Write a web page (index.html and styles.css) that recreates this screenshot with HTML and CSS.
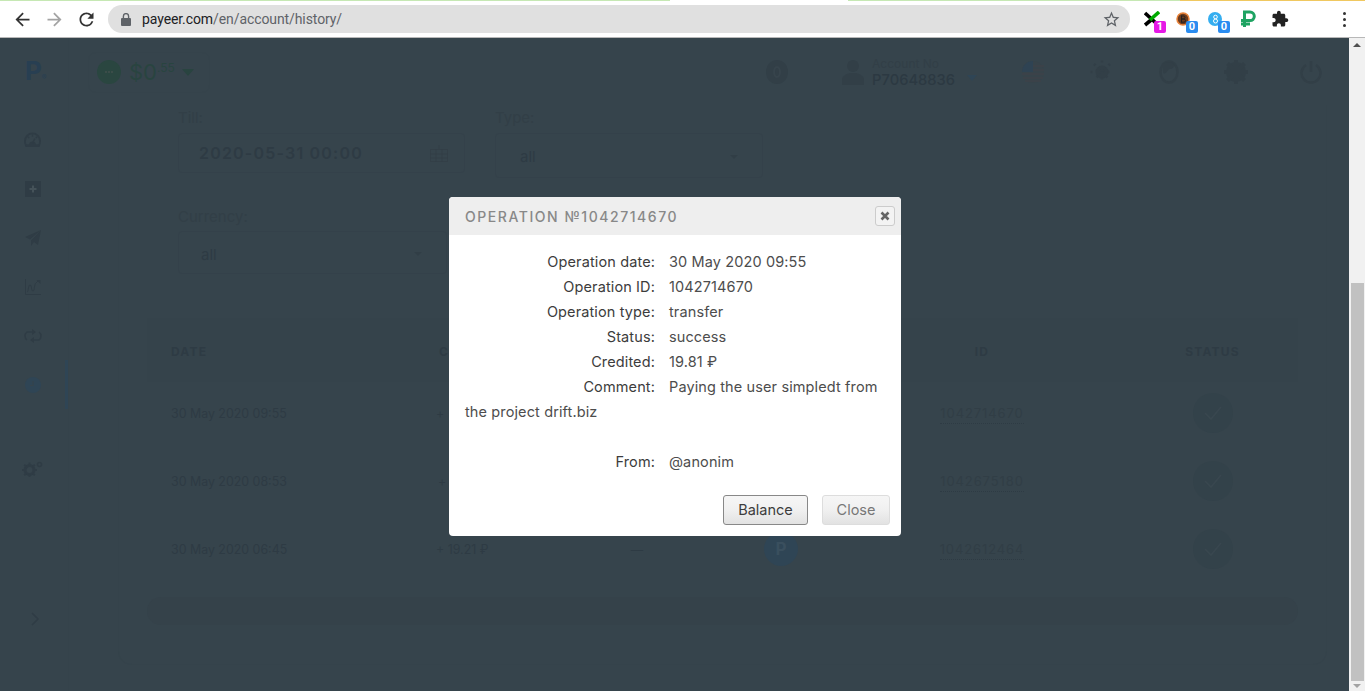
FILE: index.html
```html
<!DOCTYPE html>
<html lang="en">
<head>
  <meta charset="UTF-8">
  <meta name="viewport" content="width=device-width, initial-scale=1.0">
  <title>Payeer - History</title>
  <link rel="stylesheet" href="styles.css">
</head>
<body>
  <!-- browser toolbar -->
  <div class="load-strip"></div>
  <header class="toolbar">
    <div class="nav-btn">
      <svg width="21" height="21" viewBox="0 0 24 24"><path fill="#333" d="M20 11H7.830l5.590-5.590L12 4l-8 8 8 8 1.410-1.410L7.830 13H20v-2z"/></svg>
    </div>
    <div class="nav-btn">
      <svg width="21" height="21" viewBox="0 0 24 24"><path fill="#a3a3a3" d="M4 11h12.170l-5.590-5.590L12 4l8 8-8 8-1.410-1.410L16.170 13H4v-2z"/></svg>
    </div>
    <div class="nav-btn">
      <svg width="21" height="21" viewBox="0 0 24 24"><path fill="#333" d="M17.650 6.350A7.958 7.958 0 0 0 12 4c-4.420 0-7.990 3.580-7.990 8s3.570 8 7.990 8c3.730 0 6.840-2.550 7.730-6h-2.080A5.990 5.990 0 0 1 12 18c-3.310 0-6-2.690-6-6s2.690-6 6-6c1.660 0 3.140.69 4.220 1.780L13 11h7V4l-2.350 2.350z"/></svg>
    </div>
    <div class="omnibox">
      <svg class="lock" width="10" height="13" viewBox="0 0 10 13"><path fill="#5f6368" d="M1 5h8a1 1 0 0 1 1 1v6a1 1 0 0 1-1 1H1a1 1 0 0 1-1-1V6a1 1 0 0 1 1-1z"/><path fill="none" stroke="#5f6368" stroke-width="1.400" d="M2.400 5V3.200a2.600 2.600 0 0 1 5.200 0V5"/></svg>
      <span class="url"><b>payeer.com</b>/en/account/history/</span>
      <svg class="star" width="19" height="19" viewBox="0 0 24 24"><path fill="#5f6368" d="M22 9.240l-7.190-.62L12 2 9.190 8.630 2 9.240l5.460 4.730L5.820 21 12 17.270 18.180 21l-1.640-7.030L22 9.240zM12 15.400l-3.760 2.270 1-4.280-3.320-2.880 4.380-.38L12 6.100l1.710 4.040 4.380.38-3.320 2.880 1 4.280L12 15.400z"/></svg>
    </div>
    <div class="ext">
      <svg width="16" height="16" viewBox="0 0 16 16"><path stroke="#000" stroke-width="3.600" d="M1 2l12 11"/><path stroke="#000" stroke-width="3.600" d="M1 14l6-5"/><path stroke="#0a0" stroke-width="3.600" d="M6 9l9-8"/></svg>
      <span class="badge badge-pink">1</span>
    </div>
    <div class="ext ext-shift">
      <svg width="14" height="14" viewBox="0 0 14 14"><circle cx="7" cy="7" r="6" fill="#6b3a1e" stroke="#e8833a" stroke-width="1.500"/><path d="M5.500 3.500v7M5.500 4h2a1.500 1.500 0 0 1 0 3h-2m0 0h2.400a1.600 1.600 0 0 1 0 3.200h-2.400" fill="none" stroke="#222" stroke-width="1"/></svg>
      <span class="badge badge-blue">0</span>
    </div>
    <div class="ext ext-shift">
      <svg width="14" height="14" viewBox="0 0 14 14"><circle cx="7" cy="7" r="7" fill="#35aef0"/><circle cx="7.500" cy="5" r="1.800" fill="none" stroke="#fff" stroke-width="1"/><circle cx="7.500" cy="9" r="2" fill="none" stroke="#fff" stroke-width="1"/></svg>
      <span class="badge badge-blue">0</span>
    </div>
    <div class="ext">
      <svg width="16" height="18" viewBox="0 0 16 18"><path d="M4.500 17V2h5.500a4.200 4.200 0 0 1 0 8.600H1M1 14h9" fill="none" stroke="#1ea362" stroke-width="3"/></svg>
    </div>
    <div class="ext">
      <svg width="18" height="18" viewBox="0 0 24 24"><path fill="#222" d="M20.500 11H19V7c0-1.100-.9-2-2-2h-4V3.500C13 2.120 11.880 1 10.500 1S8 2.120 8 3.500V5H4c-1.100 0-1.990.9-1.990 2v3.800H3.500c1.490 0 2.700 1.210 2.700 2.700s-1.210 2.700-2.700 2.700H2V20c0 1.100.9 2 2 2h3.800v-1.500c0-1.490 1.210-2.700 2.700-2.700 1.490 0 2.700 1.210 2.700 2.700V22H17c1.100 0 2-.9 2-2v-4h1.500c1.380 0 2.500-1.120 2.500-2.500S21.880 11 20.500 11z"/></svg>
    </div>
    <div class="menu-dots"><i></i><i></i><i></i></div>
  </header>

  <div class="viewport">
    <div class="page">
      <aside class="sidebar">
        <div class="logo">P<small>®</small></div>
        <nav class="side-nav">
          <div class="side-item">
            <svg width="17" height="15" viewBox="0 0 18 16"><path d="M2.500 15A8 8 0 0 1 1 9.500a8 8 0 0 1 16 0A8 8 0 0 1 15.500 15" fill="none" stroke="#2f3c45" stroke-width="2"/><path fill="#2f3c45" d="M1 13h4.500a3.500 3 0 0 1 7 0H17v1a2 2 0 0 1-2 2H3a2 2 0 0 1-2-2z"/><path stroke="#2f3c45" stroke-width="1.500" d="M9 2.500v2.500M4 5l1.500 1.500M14 5l-1.500 1.500M9 12l2.500-5"/></svg>
          </div>
          <div class="side-item">
            <svg width="16" height="16" viewBox="0 0 16 16"><rect width="16" height="16" fill="#2f3c45"/><path stroke="#455259" stroke-width="2" d="M8 4.500v7M4.500 8h7"/></svg>
          </div>
          <div class="side-item">
            <svg width="16" height="16" viewBox="0 0 16 16"><path fill="#2f3c45" d="M16 0L0 7l5 2.500L16 0zM16 0L6 10.500v5.500l3-4 4 3z"/></svg>
          </div>
          <div class="side-item">
            <svg width="16" height="16" viewBox="0 0 16 16"><path d="M.5 0v15.500H16M2 13c2-1 1-7 3-7s1 6 3 6 1-7 3-8l3-3" fill="none" stroke="#2f3c45" stroke-width="1"/><path fill="#2f3c45" d="M11.500 1H15.500V5z"/></svg>
          </div>
          <div class="side-item">
            <svg width="18" height="16" viewBox="0 0 18 16"><path d="M3 12a5 5 0 0 1 0-8h7M15 4a5 5 0 0 1 0 8H8" fill="none" stroke="#2f3c45" stroke-width="1.500"/><path fill="#2f3c45" d="M8 1l4 3-4 3zM10 9l-4 3 4 3z"/></svg>
          </div>
          <div class="side-item side-item-active">
            <svg width="16" height="16" viewBox="0 0 16 16"><circle cx="8" cy="8" r="8" fill="#2f4555"/><path d="M8 4v4.500H5" fill="none" stroke="#36444c" stroke-width="1.200"/></svg>
          </div>
          <div class="side-item side-item-gear">
            <svg width="21" height="16" viewBox="0 0 21 16"><circle cx="7.500" cy="9" r="4.500" fill="none" stroke="#2f3c45" stroke-width="3"/><path stroke="#2f3c45" stroke-width="2" stroke-dasharray="3 9" d="M7.500 1.500v15M0 9h15M2.200 3.700l10.600 10.600M12.800 3.700L2.200 14.300"/><circle cx="17.500" cy="3.500" r="2" fill="none" stroke="#2f3c45" stroke-width="1.500"/></svg>
          </div>
        </nav>
        <div class="side-item side-toggle">
          <svg width="10" height="14" viewBox="0 0 10 14"><path d="M2 1l6 6-6 6" fill="none" stroke="#2f3c45" stroke-width="1.500"/></svg>
        </div>
      </aside>

      <main class="main">
        <div class="topbar">
          <div class="balance">
            <span class="balance-dot"><i></i><i></i><i></i></span>
            <span class="balance-sum">$0<sup>.55</sup></span>
            <span class="caret caret-green"></span>
          </div>
          <div class="top-right">
            <div class="top-icon top-coin">
              <svg width="22" height="24" viewBox="0 0 22 24"><ellipse cx="11" cy="12" rx="11" ry="12" fill="#323f47"/><ellipse cx="11" cy="12" rx="3" ry="5" fill="none" stroke="#37444c" stroke-width="2"/></svg>
            </div>
            <div class="account">
              <svg width="22" height="26" viewBox="0 0 22 26"><circle cx="11" cy="7" r="6" fill="#323f47"/><path fill="#323f47" d="M0 26v-5c0-4 4-6 8-7h6c4 1 8 3 8 7v5z"/></svg>
              <div class="account-text">
                <span class="account-label">Account No</span>
                <span class="account-num">P70648836</span>
              </div>
              <span class="caret caret-blue"></span>
            </div>
            <div class="top-icon top-flag">
              <svg width="22" height="22" viewBox="0 0 22 22"><circle cx="11" cy="11" r="11" fill="#37434a"/><path stroke="#3b4249" stroke-width="2" d="M0 13h22M1 17h20M3 20h16M11 5h11M11 9h11"/><path fill="#2f4353" d="M11 0v11H0A11 11 0 0 1 11 0z"/></svg>
            </div>
            <div class="top-icon top-sun">
              <svg width="24" height="24" viewBox="0 0 24 24"><circle cx="12" cy="12" r="6.500" fill="#323f47"/><path stroke="#323f47" stroke-width="2.500" stroke-dasharray="2 6.500" d="M12 .5v23M.5 12h23M4 4l16 16M20 4L4 20"/></svg>
            </div>
            <div class="top-icon">
              <svg width="20" height="24" viewBox="0 0 20 24"><ellipse cx="10" cy="12" rx="8.500" ry="10.500" fill="none" stroke="#323f47" stroke-width="2.500"/><path fill="#323f47" d="M4 4c4-3 10-2 12 1-2 2-2 4-5 4s-3 6-7 4z"/></svg>
            </div>
            <div class="top-icon">
              <svg width="24" height="24" viewBox="0 0 24 24"><circle cx="12" cy="12" r="7" fill="none" stroke="#323f47" stroke-width="6"/><path stroke="#323f47" stroke-width="4" d="M12 0v24M0 12h24M3.500 3.500l17 17M20.500 3.500l-17 17"/></svg>
            </div>
            <div class="top-icon top-power">
              <svg width="22" height="24" viewBox="0 0 22 24"><path d="M6 5a9.500 9.500 0 1 0 10 0" fill="none" stroke="#323f47" stroke-width="2.500"/><path stroke="#323f47" stroke-width="2.500" d="M11 1v11"/></svg>
            </div>
          </div>
        </div>

        <section class="panel">
          <div class="filters">
            <div class="field">
              <label class="field-label">Till:</label>
              <div class="field-box date-box">
                <span class="date-value">2020-05-31 00:00</span>
                <svg width="18" height="18" viewBox="0 0 18 18"><path d="M.5 5.500h17v12H.5zM.5 10h17M.5 14h17M6 5.500v12M12 5.500v12M9 1v4" fill="none" stroke="#333f47" stroke-width="1"/></svg>
              </div>
            </div>
            <div class="field">
              <label class="field-label">Type:</label>
              <div class="field-box select-box type-box"><span>all</span><span class="caret caret-small"></span></div>
            </div>
            <div class="field field-currency">
              <label class="field-label">Currency:</label>
              <div class="field-box select-box currency-box"><span>all</span><span class="caret caret-small"></span></div>
            </div>
          </div>

          <div class="history">
            <div class="history-row history-head">
              <div class="col-date">Date</div>
              <div class="col-credit">Credit</div>
              <div></div>
              <div></div>
              <div class="col-mid">ID</div>
              <div class="col-mid">Status</div>
            </div>
            <div class="history-row">
              <div class="col-date">30 May 2020 09:55</div>
              <div class="col-credit">+</div>
              <div></div>
              <div></div>
              <div class="col-mid"><span class="op-id">1042714670</span></div>
              <div class="col-mid"><span class="check-circle"><svg width="20" height="16" viewBox="0 0 20 16"><path d="M2 8l6 6L18 2" fill="none" stroke="#39474f" stroke-width="1.600"/></svg></span></div>
            </div>
            <div class="history-row">
              <div class="col-date">30 May 2020 08:53</div>
              <div class="col-credit col-credit-short">+</div>
              <div></div>
              <div></div>
              <div class="col-mid"><span class="op-id">1042675180</span></div>
              <div class="col-mid"><span class="check-circle"><svg width="20" height="16" viewBox="0 0 20 16"><path d="M2 8l6 6L18 2" fill="none" stroke="#39474f" stroke-width="1.600"/></svg></span></div>
            </div>
            <div class="history-row">
              <div class="col-date">30 May 2020 06:45</div>
              <div class="col-credit">+ 19.21 ₽</div>
              <div class="col-mid">—</div>
              <div class="col-mid"><span class="pay-circle">P</span></div>
              <div class="col-mid"><span class="op-id">1042612464</span></div>
              <div class="col-mid"><span class="check-circle"><svg width="20" height="16" viewBox="0 0 20 16"><path d="M2 8l6 6L18 2" fill="none" stroke="#39474f" stroke-width="1.600"/></svg></span></div>
            </div>
            <div class="history-foot"></div>
          </div>
        </section>
      </main>

      <div class="scrollbar">
        <span class="sb-arrow sb-up"></span>
        <div class="sb-track"><div class="sb-thumb"></div></div>
        <span class="sb-arrow sb-down"></span>
      </div>
    </div>

    <!-- operation dialog -->
    <div class="modal">
      <div class="modal-head">
        <span class="modal-title">Operation №1042714670</span>
        <span class="modal-x">
          <svg width="10" height="10" viewBox="0 0 10 10"><path d="M1.500 1.500l7 7M8.500 1.500l-7 7" stroke="#666" stroke-width="2.600"/></svg>
        </span>
      </div>
      <div class="modal-body">
        <div class="info"><span class="info-label">Operation date:</span><span>30 May 2020 09:55</span></div>
        <div class="info"><span class="info-label">Operation ID:</span><span>1042714670</span></div>
        <div class="info"><span class="info-label">Operation type:</span><span>transfer</span></div>
        <div class="info"><span class="info-label">Status:</span><span>success</span></div>
        <div class="info"><span class="info-label">Credited:</span><span>19.81 ₽</span></div>
        <div class="info"><span class="info-label">Comment:</span><span>Paying the user simpledt from</span></div>
        <div class="info info-comment">the project drift.biz</div>
        <div class="info"><span class="info-label">From:</span><span>@anonim</span></div>
      </div>
      <div class="modal-foot">
        <button class="btn btn-main">Balance</button>
        <button class="btn btn-close">Close</button>
      </div>
    </div>
  </div>
</body>
</html>
```

FILE: styles.css
```css
* {
  box-sizing: border-box;
}
body {
  margin: 0;
  height: 691px;
  overflow: hidden;
  font-family: Inter, 'Liberation Sans', sans-serif;
  background-color: #36444c;
  color: #2e3b44;
}

/* browser chrome */
.load-strip {
  height: 1px;
  background: linear-gradient(90deg, #c6e8b4 0, #c6e8b4 670px, #fff 670px, #fff 848px, #c6e8b4 848px, #c6e8b4 1180px, #f0c860 1180px);
}
.toolbar {
  height: 37px;
  display: flex;
  align-items: center;
  padding: 0 5px 0 6px;
  background: #fff;
  border-bottom: 1px solid #b8b8b8;
}
.nav-btn {
  width: 32px;
  display: flex;
  justify-content: center;
}
.omnibox {
  width: 1022px;
  height: 28px;
  margin: 0 6px;
  padding: 0 9px 0 13px;
  display: flex;
  align-items: center;
  background: #e0e0e0;
  border-radius: 14px;
}
.lock {
  margin-right: 11px;
}
.url {
  flex: 1;
  font: 14px Roboto, sans-serif;
  letter-spacing: -.09px;
  color: #5f6368;
}
.url b {
  font-weight: 400;
  color: #202124;
}
.ext {
  width: 32px;
  height: 28px;
  position: relative;
  display: flex;
  align-items: center;
  justify-content: center;
}
.ext-shift svg {
  margin-right: 2px;
}
.badge {
  position: absolute;
  left: 18px;
  top: 16px;
  width: 12px;
  height: 12px;
  border-radius: 2px;
  font: bold 11px/12px Roboto, sans-serif;
  text-align: center;
  color: #fff;
}
.badge-pink {
  background: #e619e6;
}
.badge-blue {
  background: #2a8cf0;
}
.menu-dots {
  width: 32px;
  margin-left: auto;
  display: flex;
  flex-direction: column;
  align-items: center;
  gap: 3px;
}
.menu-dots i {
  width: 3px;
  height: 3px;
  border-radius: 50%;
  background: #333;
}

/* page under the dialog */
.viewport {
  position: relative;
  height: 653px;
}
.page {
  height: 100%;
  display: flex;
}
.sidebar {
  width: 69px;
  flex-shrink: 0;
  display: flex;
  flex-direction: column;
  border-right: 1px solid #35434b;
  padding-bottom: 48px;
}
.logo {
  height: 67px;
  padding: 18px 0 0 25px;
  font-size: 26px;
  line-height: 30px;
  font-weight: 700;
  color: #283f52;
}
.logo small {
  font-size: 7px;
  font-weight: 400;
}
.side-nav {
  padding-top: 10px;
  flex: 1;
}
.side-item {
  height: 49px;
  display: flex;
  align-items: center;
  justify-content: center;
  border-right: 3px solid transparent;
}
.side-item-active {
  border-right-color: #2f4555;
}
.side-item-gear {
  margin-top: 35px;
}
.side-toggle {
  padding-left: 4px;
}
.main {
  flex: 1;
  min-width: 0;
  display: flex;
  flex-direction: column;
}
.topbar {
  height: 67px;
  flex-shrink: 0;
  display: flex;
  align-items: center;
  padding: 0 26px 0 19px;
}
.balance {
  width: 122px;
  height: 41px;
  display: flex;
  align-items: center;
  padding-left: 8px;
  margin-top: 1px;
  border: 1px solid #35434b;
  border-radius: 8px;
}
.balance-dot {
  width: 24px;
  height: 24px;
  flex-shrink: 0;
  border-radius: 50%;
  background: #2a4640;
  display: flex;
  align-items: center;
  justify-content: center;
  gap: 1px;
}
.balance-dot i {
  width: 2px;
  height: 2px;
  border-radius: 50%;
  background: #42504c;
}
.balance-sum {
  margin-left: 8px;
  font-size: 22px;
  color: #294440;
}
.balance-sum sup {
  font-size: 12px;
  line-height: 0;
}
.caret {
  width: 0;
  height: 0;
  border-style: solid;
  border-color: #2e3b44 transparent transparent;
  border-width: 6px 5px 0;
}
.caret-green {
  margin-left: 7px;
  border-top-color: #294440;
  border-width: 7px 6px 0;
}
.caret-blue {
  margin-left: 4px;
  margin-top: 12px;
  border-top-color: #2f4555;
}
.caret-small {
  border-width: 4px 4px 0;
  border-top-color: #313e46;
}
.top-right {
  margin-left: auto;
  display: flex;
  align-items: center;
  gap: 43px;
}
.top-icon {
  width: 24px;
  display: flex;
  justify-content: center;
}
.top-coin {
  margin-right: 10px;
}
.top-flag {
  margin-left: 1px;
}
.top-sun {
  margin-left: 2px;
}
.top-power {
  margin-left: 8px;
}
.account {
  display: flex;
  align-items: center;
  gap: 8px;
}
.account-text {
  display: flex;
  flex-direction: column;
  line-height: 16px;
}
.account-label {
  font-size: 12px;
  color: #323f47;
}
.account-num {
  font-size: 14.700px;
  font-weight: 500;
  color: #2c3942;
}
.panel {
  flex: 1;
  margin: 0 22px 26px 49px;
  padding: 3px 28px 0;
  border: 1px solid #35434b;
  border-top: 0;
  border-radius: 0 0 14px 14px;
}
.filters {
  display: grid;
  grid-template-columns: 287px 268px;
  column-gap: 30px;
  row-gap: 29px;
  padding-left: 31px;
}
.field-label {
  display: block;
  height: 25px;
  line-height: 20px;
  font-size: 15px;
  color: #323f47;
}
.field-box {
  display: flex;
  align-items: center;
  justify-content: space-between;
  padding: 0 24px;
  border: 1px solid #34414a;
  border-radius: 4px;
  font-size: 15px;
}
.date-box {
  height: 40px;
  padding: 0 16px 0 20px;
}
.date-value {
  font-size: 16px;
  font-weight: 600;
  letter-spacing: 1.200px;
}
.type-box {
  height: 45px;
  padding-top: 2px;
}
.currency-box {
  height: 43px;
  width: 269px;
  padding: 3px 24px 0 22px;
}
.field-currency {
  grid-column: 1;
}
.field-currency .field-label {
  height: 24px;
}
.history {
  margin-top: 44px;
}
.history-row {
  height: 68px;
  display: grid;
  grid-template-columns: 206px 172px 176px 112px 290px 171px;
  align-items: center;
  padding-left: 24px;
  font-size: 12.400px;
}
.history-head {
  height: 61px;
  padding-top: 5px;
  background: #35434b;
  box-shadow: 0 3px 0 #35434b;
  font-size: 12px;
  font-weight: 700;
  letter-spacing: 1.200px;
  text-transform: uppercase;
}
.col-mid {
  text-align: center;
}
.col-credit {
  padding-left: 59px;
}
.col-credit-short {
  padding-left: 61px;
}
.history-head .col-credit {
  padding-left: 62px;
}
.pay-circle {
  width: 34px;
  height: 34px;
  margin: 0 auto;
  display: flex;
  align-items: center;
  justify-content: center;
  border-radius: 50%;
  background: #2f4555;
  color: #3a4f5e;
  font-size: 17px;
  font-weight: 700;
}
.op-id {
  font-size: 13px;
  letter-spacing: .9px;
  padding-bottom: 2px;
  color: #313e46;
  border-bottom: 1px dotted #2e3b44;
}
.check-circle {
  width: 40px;
  height: 40px;
  margin: 0 auto;
  display: flex;
  align-items: center;
  justify-content: center;
  border-radius: 50%;
  background: #33424a;
}
.history-foot {
  height: 28px;
  margin-top: 14px;
  background: #35424a;
  border-radius: 14px;
}
.scrollbar {
  width: 16px;
  flex-shrink: 0;
  display: flex;
  flex-direction: column;
  align-items: center;
  background: #f1f1f1;
}
.sb-arrow {
  width: 0;
  height: 0;
  flex-shrink: 0;
  border-style: solid;
  border-color: transparent;
}
.sb-up {
  margin-top: 5px;
  border-width: 0 4px 4px;
  border-bottom-color: #505050;
}
.sb-down {
  margin: 3px 0 3px;
  border-width: 4px 4px 0;
  border-top-color: #a3a3a3;
}
.sb-track {
  flex: 1;
  width: 100%;
  display: flex;
  flex-direction: column;
  justify-content: flex-end;
  padding: 0 1px 0 2px;
}
.sb-thumb {
  height: 398px;
  background: #c1c1c1;
}

/* dialog */
.modal {
  position: absolute;
  left: 449px;
  top: 159px;
  width: 452px;
  height: 339px;
  display: flex;
  flex-direction: column;
  background: #fff;
  border-radius: 4px;
  color: #4d4d4d;
}
.modal-head {
  height: 38px;
  flex-shrink: 0;
  display: flex;
  align-items: center;
  justify-content: space-between;
  padding: 0 6px 0 16px;
  background: #eee;
  border-radius: 4px 4px 0 0;
}
.modal-title {
  font-size: 14px;
  font-weight: 500;
  letter-spacing: 1.550px;
  text-transform: uppercase;
  color: #888;
}
.modal-x {
  width: 20px;
  height: 20px;
  display: flex;
  align-items: center;
  justify-content: center;
  border: 1px solid #ccc;
  border-radius: 3px;
  background: #f3f3f3;
}
.modal-body {
  flex: 1;
  padding: 14px 16px 0;
  font-size: 14.500px;
  letter-spacing: .12px;
  line-height: 25px;
}
.info-label {
  display: inline-block;
  width: 190px;
  margin-right: 14px;
  text-align: right;
  color: #3c3c3c;
}
.info-comment {
  margin-bottom: 25px;
}
.modal-foot {
  display: flex;
  justify-content: flex-end;
  gap: 14px;
  padding: 0 11px 11px 0;
}
.btn {
  height: 30px;
  padding: 0 0 2px;
  font: 14.500px Inter, 'Liberation Sans', sans-serif;
  border-radius: 3px;
  background: linear-gradient(#f6f6f6, #f0f0f0 50%, #e2e2e2);
}
.btn-main {
  width: 85px;
  border: 1px solid #888;
  color: #3c3c3c;
}
.btn-close {
  width: 68px;
  border: 1px solid #ddd;
  color: #777;
}
```
